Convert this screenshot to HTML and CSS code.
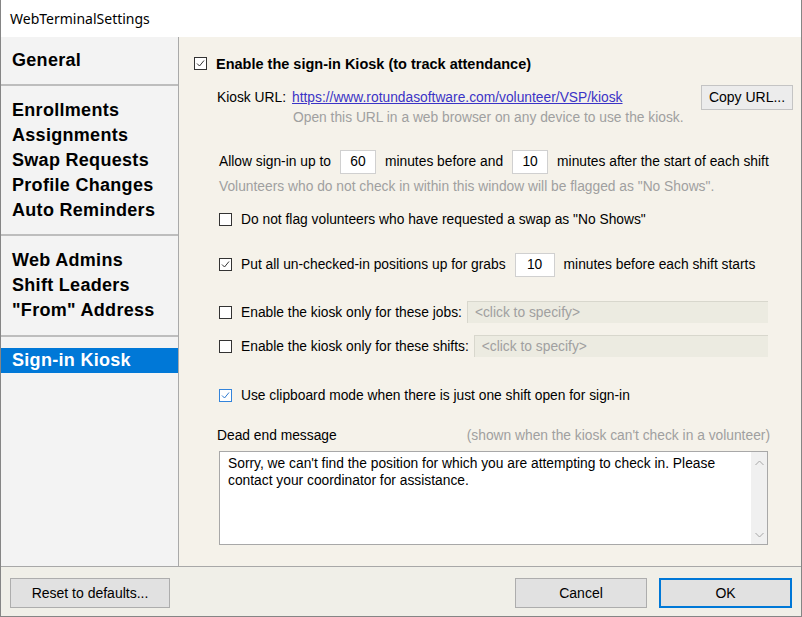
FILE: index.html
```html
<!DOCTYPE html>
<html>
<head>
  <meta charset="utf-8" />
  <title>WebTerminalSettings</title>
  <link rel="stylesheet" href="styles.css">
</head>
<body>
  <div class="window">
    <div class="titlebar">WebTerminalSettings</div>

    <div class="main">
      <!-- 左側分類 -->
      <nav class="sidebar">
        <div class="nav-group g1">
          <div class="nav-item">General</div>
        </div>
        <div class="nav-group g2">
          <div class="nav-item">Enrollments</div>
          <div class="nav-item">Assignments</div>
          <div class="nav-item">Swap Requests</div>
          <div class="nav-item">Profile Changes</div>
          <div class="nav-item">Auto Reminders</div>
        </div>
        <div class="nav-group g3">
          <div class="nav-item">Web Admins</div>
          <div class="nav-item">Shift Leaders</div>
          <div class="nav-item">"From" Address</div>
        </div>
        <div class="nav-group g4">
          <div class="nav-item active">Sign-in Kiosk</div>
        </div>
      </nav>

      <!-- 設定內容 -->
      <section class="content">
        <div class="row row-enable">
          <span class="cb checked"><svg width="11" height="11" viewBox="0 0 11 11"><polyline points="2,5.5 4.5,8 9,2.5" fill="none" stroke="#333" stroke-width="1"/></svg></span>
          <span class="title-text">Enable the sign-in Kiosk (to track attendance)</span>
        </div>

        <div class="row row-url">
          <span class="url-label">Kiosk URL:</span>
          <a class="link" href="#">https://www.rotundasoftware.com/volunteer/VSP/kiosk</a>
          <button class="btn btn-copy">Copy URL...</button>
        </div>
        <div class="hint hint-url">Open this URL in a web browser on any device to use the kiosk.</div>

        <div class="row row-allow">
          <span>Allow sign-in up to</span>
          <span class="num">60</span>
          <span>minutes before and</span>
          <span class="num">10</span>
          <span>minutes after the start of each shift</span>
        </div>
        <div class="hint hint-window">Volunteers who do not check in within this window will be flagged as "No Shows".</div>

        <div class="row opt row-noflag">
          <span class="cb"></span>
          <span>Do not flag volunteers who have requested a swap as "No Shows"</span>
        </div>

        <div class="row opt row-grabs">
          <span class="cb checked"><svg width="11" height="11" viewBox="0 0 11 11"><polyline points="2,5.5 4.5,8 9,2.5" fill="none" stroke="#333" stroke-width="1"/></svg></span>
          <span>Put all un-checked-in positions up for grabs</span>
          <span class="num num-wide">10</span>
          <span>minutes before each shift starts</span>
        </div>

        <div class="row opt row-jobs">
          <span class="cb"></span>
          <span>Enable the kiosk only for these jobs:</span>
          <span class="picker">&lt;click to specify&gt;</span>
        </div>

        <div class="row opt row-shifts">
          <span class="cb"></span>
          <span>Enable the kiosk only for these shifts:</span>
          <span class="picker">&lt;click to specify&gt;</span>
        </div>

        <div class="row opt row-clip">
          <span class="cb checked blue"><svg width="11" height="11" viewBox="0 0 11 11"><polyline points="2,5.5 4.5,8 9,2.5" fill="none" stroke="#2f7ad0" stroke-width="1"/></svg></span>
          <span>Use clipboard mode when there is just one shift open for sign-in</span>
        </div>

        <div class="row row-dead">
          <span>Dead end message</span>
          <span class="dead-note">(shown when the kiosk can't check in a volunteer)</span>
        </div>

        <div class="memo">
          <div class="memo-text">Sorry, we can't find the position for which you are attempting to check in. Please contact your coordinator for assistance.</div>
          <div class="scrollbar">
            <svg width="9" height="6" viewBox="0 0 9 6"><polyline points="0.5,5 4.5,1 8.5,5" fill="none" stroke="#a6a6a6" stroke-width="1"/></svg>
            <svg width="9" height="6" viewBox="0 0 9 6"><polyline points="0.5,1 4.5,5 8.5,1" fill="none" stroke="#a6a6a6" stroke-width="1"/></svg>
          </div>
        </div>
      </section>
    </div>

    <div class="footer">
      <button class="btn btn-reset">Reset to defaults...</button>
      <div class="footer-right">
        <button class="btn btn-cancel">Cancel</button>
        <button class="btn btn-ok">OK</button>
      </div>
    </div>
  </div>
</body>
</html>
```

FILE: styles.css
```css
* {
  margin: 0;
  padding: 0;
  box-sizing: border-box;
}

body {
  width: 802px;
  height: 617px;
  overflow: hidden;
  font-family: "Liberation Sans", Arial, sans-serif;
  font-size: 13.8px;
  color: #000;
  background: #fff;
}

.window {
  height: 617px;
  border: 1px solid #858585;
  border-top: none;
  display: flex;
  flex-direction: column;
}

.titlebar {
  height: 37px;
  flex: none;
  background: #fff;
  padding-left: 9px;
  display: flex;
  align-items: center;
  font-family: "Noto Sans", sans-serif;
  font-size: 14px;
  color: #000;
}

.main {
  height: 529px;
  flex: none;
  display: flex;
}

/* sidebar */
.sidebar {
  width: 178px;
  flex: none;
  background: #f3f3f3;
  border-right: 1px solid #a9a9a9;
}

.nav-group {
  border-bottom: 2px solid #bdbdbd;
}

.g1 { padding: 11px 0; }
.g2 { padding: 12px 0 11px; }
.g3 { padding: 12px 0 12px; }
.g4 { padding-top: 11px; border-bottom: none; }

.nav-item {
  height: 25px;
  line-height: 25px;
  padding-left: 11px;
  font-family: "Liberation Sans", Arial, sans-serif;
  font-weight: bold;
  font-size: 18px;
  letter-spacing: 0.3px;
  color: #000;
  white-space: nowrap;
}

.nav-item.active {
  background: #0078d7;
  color: #fff;
}

/* content */
.content {
  flex: 1;
  background: #f5f2ea;
  padding: 15px 8px 0 15px;
  display: flex;
  flex-direction: column;
}

.row {
  display: flex;
  align-items: center;
  white-space: nowrap;
}

.cb {
  width: 13px;
  height: 13px;
  flex: none;
  border: 1px solid #333;
  background: #fff;
  display: flex;
  align-items: center;
  justify-content: center;
  margin-right: 9px;
}

.cb.blue {
  border-color: #3384db;
}

.row-enable {
  height: 22px;
  padding-top: 1px;
}

.title-text {
  font-weight: bold;
  font-size: 14.5px;
}

.row-url {
  height: 26px;
  margin-top: 10px;
  padding-left: 23px;
}

.url-label {
  width: 75px;
}

.link {
  color: #3b34c6;
  text-decoration: underline;
}

.btn {
  font-family: "Liberation Sans", Arial, sans-serif;
  font-size: 14px;
  color: #000;
  background: #e1e1e1;
  border: 1px solid #adadad;
  cursor: pointer;
}

.btn-copy {
  margin-left: auto;
  width: 92px;
  height: 25px;
  background: #ececec;
  border-color: #c4c4c4;
}

.hint {
  color: #a0a0a0;
  height: 16px;
  line-height: 16px;
  white-space: nowrap;
}

.hint-url {
  padding-left: 99px;
}

.row-allow {
  height: 25px;
  margin-top: 23px;
  padding-left: 25px;
}

.num {
  width: 36px;
  height: 24px;
  flex: none;
  margin: 0 9px;
  background: #fff;
  border: 1px solid #d0d0d0;
  display: flex;
  align-items: center;
  justify-content: center;
}

.num-wide {
  width: 40px;
}

.hint-window {
  margin-top: 5px;
  padding-left: 25px;
}

.opt {
  padding-left: 25px;
  margin-right: 25px;
}

.row-noflag {
  height: 18px;
  margin-top: 15px;
}

.row-grabs {
  height: 25px;
  margin-top: 24px;
}

.row-jobs {
  height: 22px;
  margin-top: 24px;
}

.row-shifts {
  height: 22px;
  margin-top: 12px;
}

.picker {
  flex: 1;
  height: 22px;
  margin-left: 5px;
  padding-left: 7px;
  background: #ecebe1;
  border-top: 1px solid #d8d7cd;
  border-left: 1px solid #d8d7cd;
  color: #a0a0a0;
  display: flex;
  align-items: center;
}

.row-clip {
  height: 18px;
  margin-top: 29px;
}

.row-dead {
  height: 16px;
  margin-top: 23px;
  padding-left: 23px;
  margin-right: 23px;
  justify-content: space-between;
}

.dead-note {
  color: #a0a0a0;
}

.memo {
  height: 94px;
  margin-top: 8px;
  margin-left: 25px;
  margin-right: 25px;
  background: #fff;
  border: 1px solid #a8a8a8;
  display: flex;
}

.memo-text {
  flex: 1;
  padding: 3px 8px 0 8px;
  line-height: 17px;
}

.scrollbar {
  width: 17px;
  flex: none;
  background: #f0f0f0;
  border-left: 1px solid #fff;
  display: flex;
  flex-direction: column;
  justify-content: space-between;
  align-items: center;
  padding: 8px 0 6px;
}

/* footer */
.footer {
  flex: 1;
  background: #f0efe8;
  border-top: 1px solid #a8a8a8;
  display: flex;
  align-items: flex-start;
  justify-content: space-between;
  padding: 11px 9px 0 9px;
}

.footer-right {
  display: flex;
  gap: 12px;
}

.btn-reset {
  width: 160px;
  height: 30px;
}

.btn-cancel {
  width: 132px;
  height: 30px;
}

.btn-ok {
  width: 133px;
  height: 30px;
  border: 2px solid #0078d7;
}
```
